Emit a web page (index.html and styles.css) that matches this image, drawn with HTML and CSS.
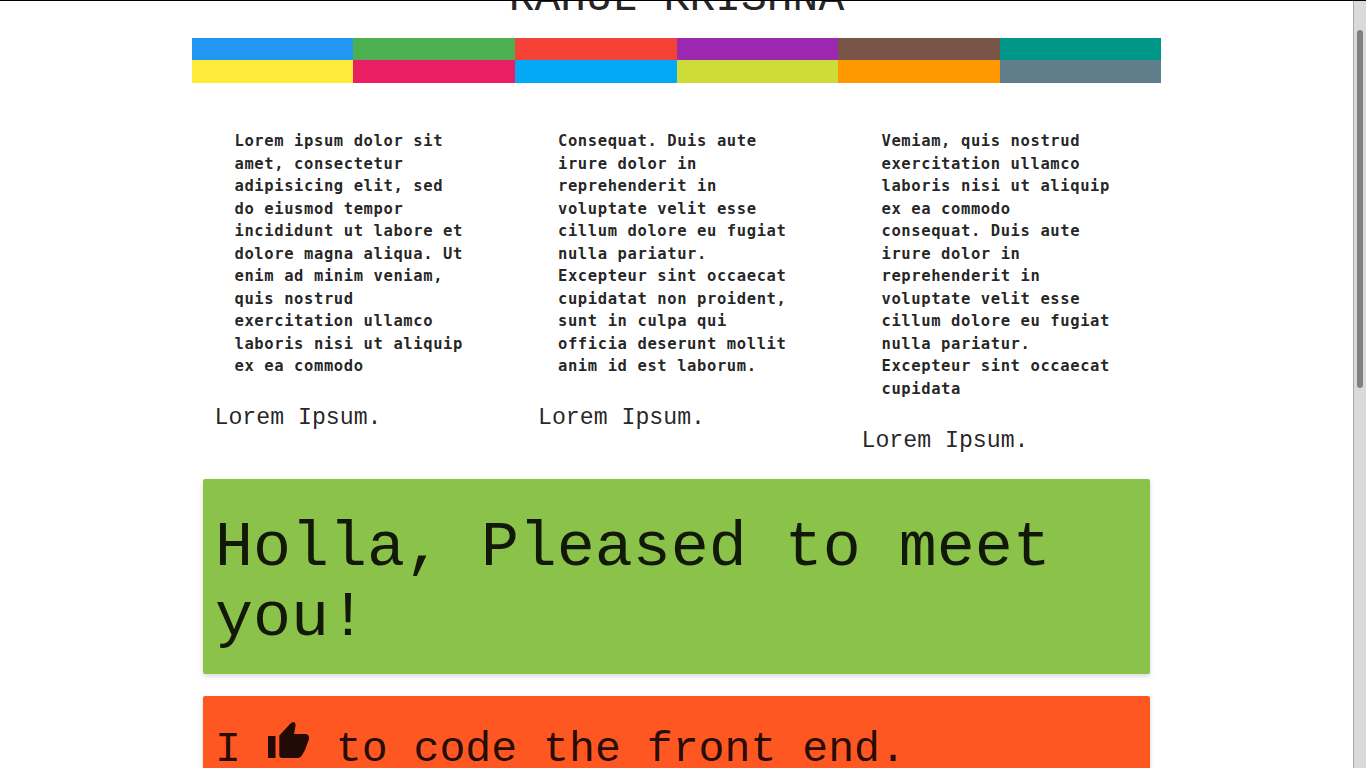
FILE: index.html
```html
<!DOCTYPE html>
<html lang="en">
<head>
    <meta charset="UTF-8">
    <meta name="viewport" content="width=device-width, initial-scale=1.0">
    <title>Rahul Krishna</title>
    <link rel="stylesheet" href="styles.css">
</head>
<body>
    <div class="page">
        <h1 class="name">RAHUL KRISHNA</h1>

        <div class="palette">
            <span class="swatch blue"></span>
            <span class="swatch green"></span>
            <span class="swatch red"></span>
            <span class="swatch purple"></span>
            <span class="swatch brown"></span>
            <span class="swatch teal"></span>
            <span class="swatch yellow"></span>
            <span class="swatch pink"></span>
            <span class="swatch sky"></span>
            <span class="swatch lime"></span>
            <span class="swatch orange"></span>
            <span class="swatch slate"></span>
        </div>

        <div class="card quotes">
            <blockquote class="quote">
                <p>Lorem ipsum dolor sit amet, consectetur adipisicing elit, sed do eiusmod tempor incididunt ut labore et dolore magna aliqua. Ut enim ad minim veniam, quis nostrud exercitation ullamco laboris nisi ut aliquip ex ea commodo</p>
                <footer>Lorem Ipsum.</footer>
            </blockquote>
            <blockquote class="quote">
                <p>Consequat. Duis aute irure dolor in reprehenderit in voluptate velit esse cillum dolore eu fugiat nulla pariatur. Excepteur sint occaecat cupidatat non proident, sunt in culpa qui officia deserunt mollit anim id est laborum.</p>
                <footer>Lorem Ipsum.</footer>
            </blockquote>
            <blockquote class="quote">
                <p>Vemiam, quis nostrud exercitation ullamco laboris nisi ut aliquip ex ea commodo consequat. Duis aute irure dolor in reprehenderit in voluptate velit esse cillum dolore eu fugiat nulla pariatur. Excepteur sint occaecat cupidata</p>
                <footer>Lorem Ipsum.</footer>
            </blockquote>
        </div>

        <div class="card hello">
            <h2>Holla, Pleased to meet you!</h2>
        </div>

        <div class="card code">
            <h3>I <svg class="thumb" viewBox="-1 0 43 37" aria-hidden="true"><path d="M0 14h7.5v22H0z"/><path d="M11.3 13.5L22 2Q24 0 26 0Q28 1 27.5 4L26 12H37Q41.5 12 41 17L37 28L33.5 34Q32 36 30 36H14Q11.3 36 11.3 33Z"/></svg> to code the front end.</h3>
        </div>
    </div>

    <div class="scrollbar"><div class="scrollbar-thumb"></div></div>
</body>
</html>
```

FILE: styles.css
```css
html, body {
  height: 100%;
}

body {
  margin: 0;
  display: flex;
  overflow: hidden;
  background: #fff;
  color: rgba(0, 0, 0, 0.87);
  font-family: "DejaVu Sans Mono", "Liberation Mono", monospace;
  border-top: 1px solid #000;
  box-sizing: border-box;
}

.page {
  flex: 1;
  height: 100%;
  overflow: hidden;
  display: flex;
  flex-direction: column;
  align-items: center;
}

.name {
  margin: -29px 0 0;
  height: 66px;
  font-family: "Liberation Mono", monospace;
  font-size: 43px;
  font-weight: 400;
  line-height: 54px;
  text-align: center;
  flex-shrink: 0;
}

.palette {
  width: 969px;
  display: grid;
  grid-template-columns: 161px 162px 162px 161px 162px 161px;
  grid-template-rows: 22px 23px;
  flex-shrink: 0;
}

.blue { background: #2196f3; }
.green { background: #4caf50; }
.red { background: #f44336; }
.purple { background: #9c27b0; }
.brown { background: #795548; }
.teal { background: #009688; }
.yellow { background: #ffeb3b; }
.pink { background: #e91e63; }
.sky { background: #03a9f4; }
.lime { background: #cddc39; }
.orange { background: #ff9800; }
.slate { background: #607d8b; }

.card {
  width: 947px;
  box-sizing: border-box;
  border-radius: 2px;
  flex-shrink: 0;
}

.quotes {
  margin-top: 27px;
  height: 346px;
  display: grid;
  grid-template-columns: repeat(3, 323.5px);
  padding-left: 11.5px;
  padding-top: 20px;
}

.quote {
  margin: 0;
}

.quote p {
  margin: 0 0 24.5px 20px;
  width: 233px;
  font-size: 15.5px;
  font-weight: 700;
  letter-spacing: 0.6px;
  line-height: 22.5px;
}

.quote footer {
  font-family: "Liberation Mono", monospace;
  font-size: 23.2px;
  line-height: 32px;
}

.hello {
  margin-top: 23px;
  height: 195px;
  padding: 35px 12px 0;
  background: #8bc34a;
  box-shadow: 0 2px 5px rgba(0, 0, 0, 0.16);
}

.hello h2 {
  margin: 0;
  font-family: "Liberation Mono", monospace;
  font-size: 63.3px;
  font-weight: 400;
  line-height: 69.5px;
}

.code {
  margin-top: 22px;
  height: 200px;
  padding: 26px 12px 0;
  background: #ff5722;
  box-shadow: 0 2px 5px rgba(0, 0, 0, 0.16);
}

.code h3 {
  margin: 0;
  font-family: "Liberation Mono", monospace;
  font-size: 43.2px;
  font-weight: 400;
  line-height: 50px;
}

.thumb {
  width: 43px;
  height: 37px;
  vertical-align: 2px;
  fill: currentColor;
}

.scrollbar {
  width: 12px;
  flex-shrink: 0;
  height: 100%;
  background: #dadada;
  border-left: 1px solid #a8a8a8;
}

.scrollbar-thumb {
  width: 6px;
  height: 358px;
  margin: 29px 0 0 3px;
  background: #7f8080;
  border-radius: 3px;
}
```
